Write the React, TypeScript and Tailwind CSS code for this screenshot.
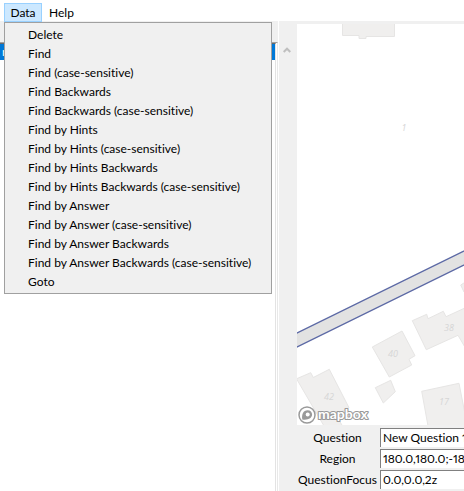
const items = [
  "Delete", "Find", "Find (case-sensitive)", "Find Backwards", "Find Backwards (case-sensitive)",
  "Find by Hints", "Find by Hints (case-sensitive)", "Find by Hints Backwards",
  "Find by Hints Backwards (case-sensitive)", "Find by Answer", "Find by Answer (case-sensitive)",
  "Find by Answer Backwards", "Find by Answer Backwards (case-sensitive)", "Goto",
];

const fields = [
  { id: "question", label: "Question", value: "New Question 1" },
  { id: "region", label: "Region", value: "180.0,180.0;-180.0,-180.0" },
  { id: "focus", label: "QuestionFocus", value: "0.0,0.0,2z" },
];

function MapView() {
  return (
    <svg className="block h-[401px] w-full bg-white" aria-label="Map" role="img">
      <g fill="#f0efee" stroke="#e6e5e4" strokeWidth="1">
        <path d="M45.500 -1V11.500H62V14.500H69V12.500H97.500V-1Z" />
        <path d="M115.300 296.700 129.700 290.300 131 294.700 146.300 287.300 149 292.700 169 283.500V325L161 311.300 129.300 325.700Z" />
        <path d="M75.300 323 105 307 118 331.700 112 335.300 114.700 341 92.300 353Z" />
        <path d="M78.300 363.700 93.700 356.300 98.300 367.700 86.300 379Z" />
        <path d="M124.700 367.300 162 359.300 169 395V402H131Z" />
        <path d="M-1 355 13.700 348.700 16.300 353.500 32.300 345.300 52 383.700 39 390.500 45.500 402H27L-1 354Z" />
        <path d="M170 257 163.700 261 167 268H170Z" />
      </g>
      <path d="M-2 310 170 225.500V239.500L-2 324Z" fill="#e2e2e2" stroke="#5c69a5" strokeWidth="1.200" />
      <g fill="#d6d6d6" className="font-['Open_Sans',sans-serif] text-[9px] italic" textAnchor="middle">
        <text x="107" y="107">1</text>
        <text x="152" y="307">38</text>
        <text x="96" y="333">40</text>
        <text x="32" y="376">42</text>
        <text x="147" y="381">17</text>
      </g>
      <g>
        <circle cx="10" cy="391" r="8" fill="#fff" stroke="#9a9a9a" strokeWidth="1.500" />
        <path d="M5.300 395.500C4.500 390.500 6.300 386.300 10.500 386.300c3 0 4.600 2 4.600 4.300 0 3.700-4 5.700-9.800 4.900Z" fill="#9a9a9a" />
        <circle cx="10.700" cy="390.500" r="2" fill="#fff" />
        <text x="21" y="395" fill="#fff" stroke="#9a9a9a" strokeWidth="2.200" strokeLinejoin="round" paintOrder="stroke" className="font-[Lato,sans-serif] text-[14px] font-bold">mapbox</text>
      </g>
    </svg>
  );
}

export default function App() {
  return (
    <div className="flex min-h-screen flex-col bg-[#f0f0f0] font-[Lato,sans-serif] text-xs text-black [font-variant-ligatures:none]">
      <nav className="flex h-[21px] shrink-0 bg-white px-1 pt-[3px]">
        <div className="relative">
          <button className="h-[19px] w-[38px] border border-[#99d1ff] bg-[#cce8ff] leading-4">Data</button>
          <ul className="absolute top-[19px] left-0 z-10 w-[268px] border border-[#a0a0a0] bg-[#f0f0f0] py-[2px]">
            {items.map((item) => (
              <li key={item}>
                <button className="block h-[19px] w-full pl-[23px] text-left leading-5 whitespace-nowrap">{item}</button>
              </li>
            ))}
          </ul>
        </div>
        <button className="h-[19px] px-[7px] leading-4">Help</button>
      </nav>
      <main className="flex grow">
        <section className="flex w-[279px] shrink-0 flex-col border-r border-white pt-[21px]">
          <div className="flex grow flex-col border-t border-r border-t-[#a0a0a0] border-r-[#e8e8e8] bg-white">
            <div className="mr-px grow border-t border-r border-t-[#696969] border-r-[#e3e3e3] bg-white">
              <div className="h-4 bg-[#0078d7] pl-[2px] leading-4 text-white">n</div>
            </div>
          </div>
        </section>
        <div className="flex w-[18px] shrink-0 justify-center pt-[25px] pr-[2px]">
          <svg className="h-2 w-2" viewBox="0 0 8 8" fill="none" stroke="#bfbfbf" strokeWidth="2" aria-hidden="true">
            <path d="m.7 6 3.300-3.300 3.300 3.300" />
          </svg>
        </div>
        <section className="min-w-0 grow pt-[3px]">
          <MapView />
          <form className="flex flex-col gap-[2px] pt-[3px]">
            {fields.map((f) => (
              <div key={f.id} className="flex h-[19px]">
                <label htmlFor={f.id} className="w-[83px] shrink-0 pr-[2px] text-center leading-5">{f.label}</label>
                <input id={f.id} defaultValue={f.value} className="min-w-0 grow border-t border-l border-[#808080] bg-white pl-[2px] proportional-nums outline-none" />
              </div>
            ))}
          </form>
        </section>
      </main>
    </div>
  );
}
